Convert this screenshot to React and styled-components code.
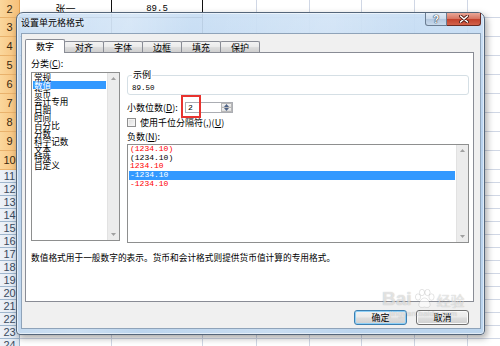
import React from 'react';
import styled, { createGlobalStyle } from 'styled-components';

const CJK = `"Noto Sans CJK SC", "Liberation Sans", sans-serif`;
const MONO = `"Liberation Mono", "Noto Sans CJK SC", monospace`;

const GlobalStyle = createGlobalStyle`
  html, body {
    margin: 0;
    padding: 0;
    background: #fff;
  }
  body {
    font-family: ${CJK};
    color: #000;
  }
  *, *::before, *::after {
    box-sizing: border-box;
  }
`;

const Screen = styled.div`
  position: relative;
  width: 500px;
  height: 346px;
  overflow: hidden;
  background: #fff;
`;

/* ---------- spreadsheet behind the dialog ---------- */

const COL_W = [92, 91, 54, 53, 52, 53, 53, 60];
const ROWS = Array.from({ length: 23 }, (_, i) => i + 2);
const rowH = (r) => (r === 2 ? 18 : r <= 10 ? 19 : 13);
const DATA = { 2: ['张一', '89.5'] };

const Sheet = styled.div`
  display: grid;
  grid-template-columns: 20px ${COL_W.map((w) => `${w}px`).join(' ')};
  grid-template-rows: ${ROWS.map((r) => `${rowH(r)}px`).join(' ')};
`;

const RowHead = styled.div`
  display: flex;
  align-items: center;
  justify-content: center;
  font-family: "Liberation Sans", sans-serif;
  font-size: 11px;
  color: ${(p) => (p.$sel ? '#3a2a10' : '#3b4b5e')};
  background: ${(p) =>
    p.$sel
      ? 'linear-gradient(90deg, #fbd79c, #f6c07a)'
      : 'linear-gradient(90deg, #eef2f8, #dde6f1)'};
  border-right: 1px solid ${(p) => (p.$sel ? '#e3a354' : '#9eb6ce')};
  border-bottom: 1px solid ${(p) => (p.$sel ? '#e9b26c' : '#9eb6ce')};
`;

const Cell = styled.div`
  display: flex;
  align-items: center;
  justify-content: center;
  font-family: ${(p) => (p.$num ? MONO : CJK)};
  font-size: ${(p) => (p.$num ? '9px' : '10px')};
  color: #000;
  border-right: 1px solid ${(p) => (p.$boxed ? '#111' : '#d0d7e5')};
  border-bottom: 1px solid ${(p) => (p.$boxed ? '#111' : '#d0d7e5')};
`;

/* ---------- dialog window ---------- */

const Window = styled.div`
  position: absolute;
  left: 16px;
  top: 12px;
  width: 469px;
  height: 323px;
  display: flex;
  flex-direction: column;
  border: 1px solid #55667a;
  border-radius: 7px 7px 4px 4px;
  background:
    linear-gradient(100deg, rgba(255, 255, 255, 0) 0%, rgba(255, 255, 255, 0.25) 22%,
      rgba(255, 255, 255, 0) 34%, rgba(255, 255, 255, 0.2) 60%, rgba(255, 255, 255, 0) 75%),
    linear-gradient(180deg, rgba(200, 222, 244, 0.93) 0%, rgba(180, 208, 238, 0.95) 40%, #bcd5ee 100%);
  box-shadow: inset 0 0 0 1px rgba(255, 255, 255, 0.55), 2px 3px 7px rgba(0, 0, 0, 0.35);
`;

const TitleBar = styled.div`
  height: 20px;
  flex: none;
  display: flex;
  align-items: flex-start;
`;

const Title = styled.div`
  flex: 1;
  padding-left: 4px;
  line-height: 20px;
  font-size: 9px;
  color: #000;
  text-shadow: 0 0 6px rgba(255, 255, 255, 0.9);
`;

const CaptionButtons = styled.div`
  display: flex;
  margin-right: 3px;
`;

const HelpButton = styled.div`
  width: 22px;
  height: 13px;
  display: flex;
  align-items: center;
  justify-content: center;
  border: 1px solid #6b7d92;
  border-top: none;
  border-radius: 0 0 0 3px;
  background: linear-gradient(180deg, #e3ecf6 0%, #ccdbec 48%, #b3c7de 52%, #c9daec 100%);
  font-family: "Liberation Sans", sans-serif;
  font-weight: bold;
  font-size: 10px;
  color: #fff;
  text-shadow: 0 0 1px #2d3e55, 0 0 1px #2d3e55, 0 0 1px #2d3e55;
`;

const CloseButton = styled.div`
  width: 34px;
  height: 13px;
  display: flex;
  align-items: center;
  justify-content: center;
  border: 1px solid #6a2a21;
  border-left: none;
  border-top: none;
  border-radius: 0 0 3px 0;
  background: linear-gradient(180deg, #eaa797 0%, #d77461 48%, #c2412b 52%, #d2624b 100%);
`;

const Client = styled.div`
  flex: 1;
  margin: 0 3px 5px 4px;
  border: 1px solid #8fa3b9;
  background: #f0f0f0;
  padding: 5px 6px 0 3px;
  display: flex;
  flex-direction: column;
`;

const TabStrip = styled.div`
  height: 13px;
  display: flex;
  align-items: flex-end;
  position: relative;
  z-index: 2;
`;

const Tab = styled.div`
  width: 40px;
  margin-left: ${(p) => (p.$first ? 0 : -1)}px;
  height: ${(p) => (p.$active ? 14 : 11)}px;
  margin-bottom: ${(p) => (p.$active ? -1 : 0)}px;
  display: flex;
  align-items: center;
  justify-content: center;
  font-size: 9px;
  color: #000;
  border: 1px solid #898c95;
  border-bottom: none;
  border-radius: 2px 2px 0 0;
  background: ${(p) =>
    p.$active
      ? '#fff'
      : 'linear-gradient(180deg, #f3f3f3 0%, #ebebeb 45%, #dddddd 55%, #cfcfcf 100%)'};
  position: relative;
  z-index: ${(p) => (p.$active ? 2 : 1)};
`;

const Panel = styled.div`
  height: 250px;
  flex: none;
  border: 1px solid #898c95;
  background: #fff;
  padding: 6px 4px 0 5px;
  display: flex;
  flex-direction: column;
`;

const TopGrid = styled.div`
  display: grid;
  grid-template-columns: 89px 342px;
  column-gap: 7px;
`;

const Column = styled.div`
  display: flex;
  flex-direction: column;
`;

const Label = styled.div`
  height: 10px;
  line-height: 10px;
  font-size: 9px;
  white-space: nowrap;
  margin-top: ${(p) => p.$mt || 0}px;
`;

const ListBox = styled.div`
  height: ${(p) => p.$h}px;
  margin-top: ${(p) => p.$mt}px;
  border: 1px solid #8e8f8f;
  background: #fff;
  display: flex;
`;

const Items = styled.div`
  flex: 1;
  min-width: 0;
  padding: 0 1px;
`;

const CatItem = styled.div`
  height: 8px;
  line-height: 8px;
  font-size: 8.6px;
  padding-left: 1px;
  white-space: nowrap;
  color: ${(p) => (p.$sel ? '#fff' : '#000')};
  background: ${(p) => (p.$sel ? '#3399ff' : 'transparent')};
`;

const NegItem = styled.div`
  height: 8.7px;
  line-height: 8.7px;
  font-family: ${MONO};
  font-size: 8px;
  padding-left: 1px;
  white-space: nowrap;
  color: ${(p) => (p.$sel ? '#fff' : p.$red ? '#ff0000' : '#000')};
  background: ${(p) => (p.$sel ? '#3399ff' : 'transparent')};
`;

const ScrollTrack = styled.div`
  width: 12px;
  flex: none;
  background: #ececec;
  border-left: 1px solid #e2e2e2;
  display: flex;
  flex-direction: column;
  justify-content: space-between;
  align-items: center;
  padding: 4px 0 4px;
`;

const Group = styled.fieldset`
  margin: 11px 0 0 0;
  padding: 3px 4px 1px 4px;
  min-width: 0;
  height: 25px;
  border: 1px solid #d5dfe5;
  border-radius: 3px;
`;

const Legend = styled.legend`
  padding: 0 1px;
  height: 10px;
  line-height: 10px;
  font-size: 9px;
`;

const Sample = styled.div`
  height: 10px;
  line-height: 10px;
  font-family: ${MONO};
  font-size: 7.5px;
`;

const FieldRow = styled.div`
  display: flex;
  align-items: center;
  margin-top: ${(p) => p.$mt}px;
  height: ${(p) => p.$h}px;
`;

const FieldLabel = styled.div`
  width: 58px;
  flex: none;
  font-size: 9px;
  line-height: 10px;
  white-space: nowrap;
`;

const Spin = styled.div`
  position: relative;
  width: 48px;
  height: 11px;
  border: 1px solid #abadb3;
  display: flex;
  background: #fff;
`;

const SpinValue = styled.div`
  flex: 1;
  padding-left: 2px;
  font-family: ${MONO};
  font-size: 8px;
  line-height: 9px;
`;

const SpinButtons = styled.div`
  width: 11px;
  display: flex;
  flex-direction: column;
`;

const SpinArrow = styled.div`
  flex: 1;
  display: flex;
  align-items: center;
  justify-content: center;
  background: linear-gradient(180deg, #f4f4f4, #dcdcdc);
  border: 1px solid #b8b8b8;
  margin-top: ${(p) => (p.$down ? -1 : 0)}px;
`;

const Highlight = styled.div`
  position: absolute;
  left: -5px;
  top: -8px;
  width: 20px;
  height: 23px;
  border: 2px solid #e8332f;
  pointer-events: none;
`;

const CheckBox = styled.div`
  width: 9px;
  height: 9px;
  flex: none;
  border: 1px solid #8f8f8f;
  background: linear-gradient(135deg, #dcdcdc, #f8f8f8);
  box-shadow: inset 0 0 0 1px #f4f4f4;
`;

const CheckText = styled.div`
  margin-left: 4px;
  font-size: 9px;
  line-height: 10px;
  white-space: nowrap;
`;

const Description = styled.div`
  margin-top: 10px;
  height: 10px;
  line-height: 10px;
  font-size: 8.7px;
  white-space: nowrap;
`;

const ButtonRow = styled.div`
  margin-top: 8px;
  display: flex;
  justify-content: flex-end;
  gap: 9px;
  padding-right: 5px;
`;

const Button = styled.div`
  width: 53px;
  height: 15px;
  display: flex;
  align-items: center;
  justify-content: center;
  font-size: 9px;
  border: 1px solid ${(p) => (p.$default ? '#3c7fb1' : '#707070')};
  border-radius: 3px;
  background: linear-gradient(180deg, #f2f2f2 0%, #ebebeb 45%, #dddddd 55%, #cfcfcf 100%);
  box-shadow: ${(p) => (p.$default ? 'inset 0 0 0 1px #8fd0f7' : 'inset 0 0 0 1px #fbfbfb')};
`;

/* ---------- watermark ---------- */

const Watermark = styled.div`
  position: absolute;
  left: 382px;
  top: 289px;
  display: flex;
  flex-direction: column;
  align-items: center;
  pointer-events: none;
  color: rgba(255, 255, 255, 0.6);
  text-shadow: 0 0 1px rgba(0, 0, 0, 0.3);
`;

const MarkTop = styled.div`
  display: flex;
  align-items: flex-end;
  gap: 2px;
`;

const MarkBai = styled.span`
  font-family: "Liberation Sans", sans-serif;
  font-weight: bold;
  font-size: 19px;
  line-height: 20px;
`;

const MarkJy = styled.span`
  font-size: 14px;
  line-height: 18px;
`;

const MarkUrl = styled.div`
  font-family: "Liberation Sans", sans-serif;
  font-size: 8px;
  line-height: 9px;
  letter-spacing: 0.2px;
  color: rgba(255, 255, 255, 0.55);
`;

const Triangle = ({ down, color = '#a0a0a0' }) => (
  <svg width="5" height="3" viewBox="0 0 5 3">
    <path d={down ? 'M0 0 L5 0 L2.5 3 Z' : 'M0 3 L5 3 L2.5 0 Z'} fill={color} />
  </svg>
);

const CATEGORIES = ['常规', '数值', '货币', '会计专用', '日期', '时间', '百分比', '分数', '科学记数', '文本', '特殊', '自定义'];
const NEGATIVES = [
  { text: '(1234.10)', red: true },
  { text: '(1234.10)' },
  { text: '1234.10', red: true },
  { text: '-1234.10', sel: true },
  { text: '-1234.10', red: true },
];
const TABS = ['数字', '对齐', '字体', '边框', '填充', '保护'];

export default function App() {
  return (
    <Screen>
      <GlobalStyle />
      <Sheet>
        {ROWS.map((r) => (
          <React.Fragment key={r}>
            <RowHead $sel={r <= 10}>{r}</RowHead>
            {COL_W.map((w, c) => (
              <Cell key={c} $boxed={r <= 10 && c < 2} $num={c === 1}>
                {DATA[r] ? DATA[r][c] : null}
              </Cell>
            ))}
          </React.Fragment>
        ))}
      </Sheet>

      <Window>
        <TitleBar>
          <Title>设置单元格格式</Title>
          <CaptionButtons>
            <HelpButton>?</HelpButton>
            <CloseButton>
              <svg width="10" height="8" viewBox="0 0 10 8">
                <path d="M1.5 1 L8.5 7 M8.5 1 L1.5 7" stroke="#4a140e" strokeWidth="3.2" strokeLinecap="round" />
                <path d="M1.5 1 L8.5 7 M8.5 1 L1.5 7" stroke="#fff" strokeWidth="1.6" strokeLinecap="round" />
              </svg>
            </CloseButton>
          </CaptionButtons>
        </TitleBar>

        <Client>
          <TabStrip>
            {TABS.map((t, i) => (
              <Tab key={t} $active={i === 0} $first={i === 0}>
                {t}
              </Tab>
            ))}
          </TabStrip>

          <Panel>
            <TopGrid>
              <Column>
                <Label>
                  分类(<u>C</u>):
                </Label>
                <ListBox $h={169} $mt={3}>
                  <Items>
                    {CATEGORIES.map((c, i) => (
                      <CatItem key={c} $sel={i === 1}>
                        {c}
                      </CatItem>
                    ))}
                  </Items>
                  <ScrollTrack>
                    <Triangle />
                    <Triangle down />
                  </ScrollTrack>
                </ListBox>
              </Column>

              <Column>
                <Group>
                  <Legend>示例</Legend>
                  <Sample>89.50</Sample>
                </Group>

                <FieldRow $mt={7} $h={11}>
                  <FieldLabel>
                    小数位数(<u>D</u>):
                  </FieldLabel>
                  <Spin>
                    <SpinValue>2</SpinValue>
                    <SpinButtons>
                      <SpinArrow>
                        <Triangle color="#4d6185" />
                      </SpinArrow>
                      <SpinArrow $down>
                        <Triangle down color="#4d6185" />
                      </SpinArrow>
                    </SpinButtons>
                    <Highlight />
                  </Spin>
                </FieldRow>

                <FieldRow $mt={5} $h={9}>
                  <CheckBox />
                  <CheckText>
                    使用千位分隔符(,)(<u>U</u>)
                  </CheckText>
                </FieldRow>

                <Label $mt={5}>
                  负数(<u>N</u>):
                </Label>
                <ListBox $h={99} $mt={2}>
                  <Items>
                    {NEGATIVES.map((n, i) => (
                      <NegItem key={i} $red={n.red} $sel={n.sel}>
                        {n.text}
                      </NegItem>
                    ))}
                  </Items>
                  <ScrollTrack>
                    <Triangle />
                    <Triangle down />
                  </ScrollTrack>
                </ListBox>
              </Column>
            </TopGrid>

            <Description>数值格式用于一般数字的表示。货币和会计格式则提供货币值计算的专用格式。</Description>
          </Panel>

          <ButtonRow>
            <Button $default>确定</Button>
            <Button>取消</Button>
          </ButtonRow>
        </Client>
      </Window>

      <Watermark>
        <MarkTop>
          <MarkBai>Bai</MarkBai>
          <svg width="21" height="20" viewBox="0 0 21 20">
            <g fill="rgba(255,255,255,0.6)" stroke="rgba(0,0,0,0.18)" strokeWidth="0.6">
              <ellipse cx="4" cy="8" rx="2.6" ry="3.2" />
              <ellipse cx="8" cy="3.5" rx="2.6" ry="3.2" />
              <ellipse cx="13.5" cy="3.5" rx="2.6" ry="3.2" />
              <ellipse cx="17.5" cy="8" rx="2.6" ry="3.2" />
              <path d="M10.5 9 C7 9 4.5 14 5 16.5 C5.6 19 9 18.5 10.5 18 C12 18.5 15.4 19 16 16.5 C16.5 14 14 9 10.5 9 Z" />
            </g>
          </svg>
          <MarkJy>经验</MarkJy>
        </MarkTop>
        <MarkUrl>jingyan.baidu.com</MarkUrl>
      </Watermark>
    </Screen>
  );
}
